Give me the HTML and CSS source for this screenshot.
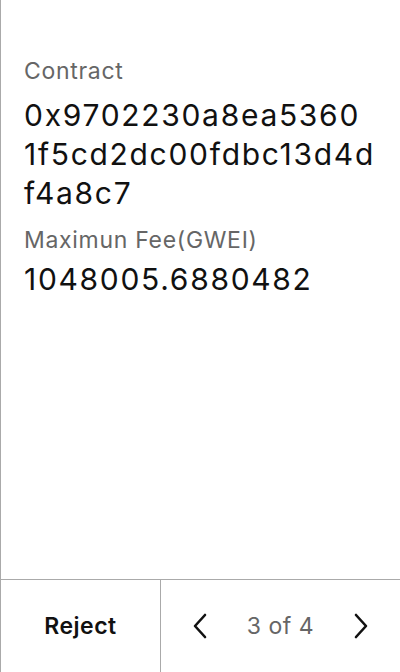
FILE: index.html
```html
<!DOCTYPE html>
<html>
<head>
<meta charset="utf-8">
<link rel="stylesheet" href="styles.css">
</head>
<body>
<div class="screen">
  <main class="content">
    <div class="label">Contract</div>
    <div class="value value-first">0x9702230a8ea5360<br>1f5cd2dc00fdbc13d4d<br>f4a8c7</div>
    <div class="label label-second">Maximun Fee(GWEI)</div>
    <div class="value value-second">1048005.6880482</div>
  </main>
  <footer class="bar">
    <div class="reject">Reject</div>
    <div class="pager">
      <svg class="chev" width="16" height="26" viewBox="0 0 16 26"><path d="M13 2 L3 13 L13 24" fill="none" stroke="#111" stroke-width="2.6" stroke-linecap="round" stroke-linejoin="round"/></svg>
      <span class="count">3 of 4</span>
      <svg class="chev" width="16" height="26" viewBox="0 0 16 26"><path d="M3 2 L13 13 L3 24" fill="none" stroke="#111" stroke-width="2.6" stroke-linecap="round" stroke-linejoin="round"/></svg>
    </div>
  </footer>
</div>
</body>
</html>
```
FILE: styles.css
```css
html, body {
  margin: 0;
  padding: 0;
  background: #fff;
}
body {
  font-family: Inter, "Noto Sans", sans-serif;
  color: #111;
}
.screen {
  width: 400px;
  height: 672px;
  box-sizing: border-box;
  border-left: 1px solid #aaa;
  display: flex;
  flex-direction: column;
}
.content {
  flex: 1;
  padding: 57px 0 0 23px;
}
.label {
  font-size: 23px;
  line-height: 28px;
  letter-spacing: 0.7px;
  color: #666;
}
.value {
  font-size: 30px;
  line-height: 39px;
  letter-spacing: 1.7px;
  color: #111;
}
.value-first {
  margin-top: 11px;
}
.label-second {
  margin-top: 13px;
}
.value-second {
  margin-top: 6px;
}
.bar {
  height: 92px;
  border-top: 1px solid #aaa;
  display: flex;
}
.reject {
  width: 159px;
  border-right: 1px solid #aaa;
  display: flex;
  align-items: center;
  justify-content: center;
  font-size: 23px;
  font-weight: 600;
  letter-spacing: 0.5px;
  color: #111;
}
.pager {
  flex: 1;
  display: flex;
  align-items: center;
  justify-content: space-between;
  padding: 0 31px 0 31px;
}
.count {
  font-size: 23px;
  letter-spacing: 0.5px;
  color: #666;
}
.chev {
  display: block;
}
```
